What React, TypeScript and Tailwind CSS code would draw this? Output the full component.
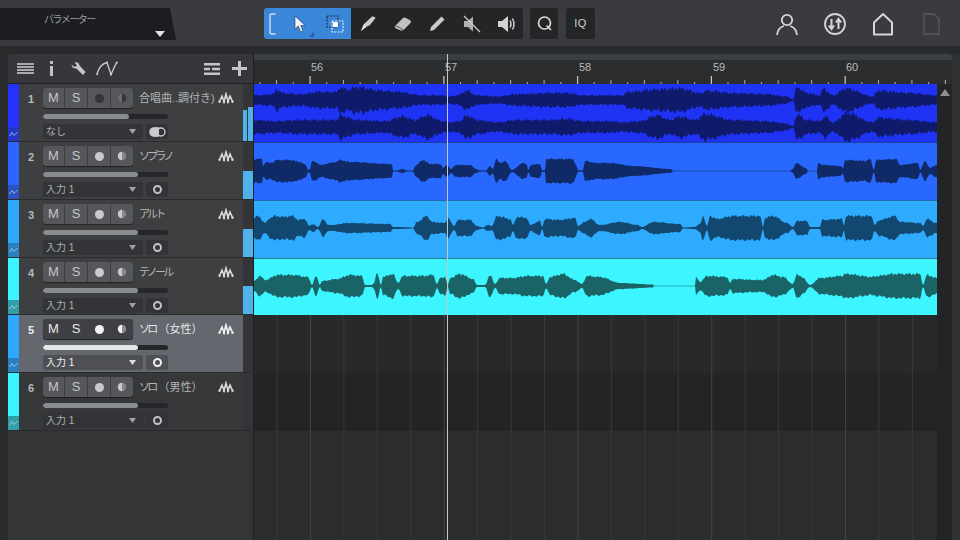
import React from "react";

type P = [number, number];
const T1A: P[] = [[254,4],[273,5],[277,9],[283,6],[300,5],[320,7],[337,7],[340,11],[347,9],[357,11],[383,8],[397,7],[423,4],[443,4],[448,3],[457,4],[467,8],[477,4],[497,3],[517,5],[550,6],[567,6],[583,4],[610,4],[623,4],[627,7],[657,9],[680,10],[700,6],[707,8],[733,6],[767,5],[787,3],[793,0.5],[797,11],[807,6],[820,4],[823,10],[833,4],[846,10],[873,3],[878,8],[910,6],[936,4]];
const T1B: P[] = [[254,6],[277,5],[300,6],[320,6],[337,6],[340,10],[357,6],[385,5],[403,9],[415,6],[427,10],[443,5],[450,4],[460,5],[467,10],[477,6],[497,4],[517,6],[550,6],[567,7],[583,5],[610,5],[623,4],[640,5],[657,10],[670,6],[680,9],[695,6],[705,11],[733,6],[767,5],[787,3],[793,0.5],[797,11],[807,6],[820,5],[825,9],[833,4],[847,12],[873,4],[878,8],[910,6],[936,4]];
const T2: P[] = [[254,12],[262,12],[263,5],[266,9],[270,8],[278,11],[290,11],[300,9],[306,6],[308,1],[310,2],[312,10],[316,9],[320,6],[336,9],[340,11],[350,9],[390,7],[392.5,6],[393,0.4],[397,0.6],[402,2],[407,0.5],[413,0.4],[415,5],[423,11],[430,7],[441,7],[443,3],[447,6],[451,2],[456,6],[470,6],[476,2],[480,0.6],[486,0.6],[490,5],[493,2],[496,12],[500,8],[505,10],[512,1],[523,8],[527,6],[528,1],[531,6],[540,7],[542,0.8],[545,0.8],[546,12],[573,12],[576,6],[578,0.8],[583,0.8],[585,10],[596,8],[610,8],[633,5],[671,2],[673,0.3],[790,0.3],[793,2],[796,8],[806,3],[808,0.3],[817,0.3],[818,8],[823,6],[841,5],[843,2],[845,11],[866,10],[870,12],[874,1],[876,11],[896,12],[900,6],[918,8],[920,1],[925,10],[930,3],[936,6]];
const T3: P[] = [[254,10],[258,12],[265,5],[270,10],[275,12],[283,11],[293,12],[298,8],[305,9],[309,2],[313,4],[318,1],[323,9],[328,3],[333,3],[347,5],[390,4],[393,1],[397,1],[408,0.7],[413,0.3],[417,6],[427,12],[432,6],[445,5],[448,10],[454,2],[458,8],[470,8],[477,2],[483,0.5],[488,3],[492,2],[497,12],[510,9],[513,3],[517,11],[527,10],[530,3],[540,7],[542,1],[545,9],[560,8],[575,10],[578,2],[585,6],[590,9],[600,3],[620,6],[638,3],[642,1],[653,6],[680,4],[683,0.5],[695,1],[700,4],[703,12],[707,2],[710,12],[717,9],[733,12],[760,12],[763,1],[765,10],[773,12],[787,5],[793,1],[797,7],[807,7],[810,1],[820,1],[822,8],[842,9],[844,2],[846,12],[872,12],[874,3],[880,8],[895,12],[900,6],[920,5],[923,2],[927,9],[936,5]];
const T4: P[] = [[254,5],[260,10],[265,6],[278,11],[293,11],[308,9],[312,1],[316,10],[320,1],[322,5],[337,7],[350,11],[362,10],[365,1],[372,1],[374,3],[377,13],[381,1],[383,9],[393,12],[398,3],[403,10],[423,10],[433,11],[437,2],[440,8],[445,9],[448,1],[450,8],[460,12],[473,7],[477,1],[485,1],[490,11],[495,2],[500,8],[513,8],[527,10],[543,10],[546,2],[550,9],[563,12],[575,6],[582,2],[587,10],[600,9],[620,3],[653,1.5],[654,0.3],[695,0.3],[696,9],[700,4],[707,10],[727,9],[730,3],[733,7],[757,6],[763,6],[773,11],[783,9],[793,2],[797,12],[803,8],[810,1],[820,8],[842,10],[845,12],[873,9],[877,10],[893,12],[920,12],[923,1],[927,11],[936,8]];

function envPath(pts: P[], c: number, seed: number, jag: number, scale = 1) {
  const top: string[] = [];
  const bot: string[] = [];
  let i = 0;
  for (let x = 254; x <= 937; x += 1) {
    while (i < pts.length - 2 && pts[i + 1][0] < x) i++;
    const [x0, h0] = pts[i];
    const [x1, h1] = pts[i + 1];
    const t = Math.min(1, Math.max(0, (x - x0) / (x1 - x0)));
    const s = t * t * (3 - 2 * t);
    const h = (h0 + (h1 - h0) * s) * scale;
    const n1 = 1 + jag * (Math.sin(x * 1.73 + seed) + 0.6 * Math.sin(x * 0.71 + seed * 2));
    const n2 = 1 + jag * (Math.sin(x * 1.31 + seed * 3) + 0.6 * Math.sin(x * 0.57 + seed));
    top.push(`${x - 254},${(c - Math.max(0.3, h * n1)).toFixed(1)}`);
    bot.unshift(`${x - 254},${(c + Math.max(0.3, h * n2)).toFixed(1)}`);
  }
  return "M" + top.concat(bot).join("L") + "Z";
}

const Wave = ({ color, paths, h }: { color: string; paths: string[]; h: number }) => (
  <svg width="683" height={h} className="block">
    {paths.map((d, i) => (
      <path key={i} d={d} fill={color} />
    ))}
  </svg>
);

const WaveIcon = ({ on }: { on: boolean }) => {
  const c = on ? "#f0f0f0" : "#d6d8da";
  return (
    <svg width="16" height="12" viewBox="0 0 16 12" fill="none" stroke={c} strokeWidth="1.6" className="-ml-px">
      <path d="M1.5 9.5 4 4 6 9.5 8 2 10 9.5 12 4 14.5 9.5" />
      <circle cx="1.5" cy="9.8" r="1.2" fill={c} stroke="none" />
      <circle cx="6" cy="10" r="1.2" fill={c} stroke="none" />
      <circle cx="10" cy="10" r="1.2" fill={c} stroke="none" />
      <circle cx="14.5" cy="9.8" r="1.2" fill={c} stroke="none" />
    </svg>
  );
};

type Track = {
  n: number; kana: string; rest: string; color: string; auto: string; input: string; fill: number;
  height: string; meter: "double" | "single" | "none"; state: "dim" | "normal" | "selected" | "quiet";
};

const tracks: Track[] = [
  { n: 1, kana: "", rest: "合唱曲..調付き)", color: "bg-[#2233ff]", auto: "bg-[#2336c8]", input: "なし", fill: 68.5, height: "h-[58px]", meter: "double", state: "dim" },
  { n: 2, kana: "ソプラノ", rest: "", color: "bg-[#2a66ff]", auto: "bg-[#2a52c0]", input: "入力 1", fill: 76, height: "h-[58px]", meter: "single", state: "normal" },
  { n: 3, kana: "アルト", rest: "", color: "bg-[#2ea8ff]", auto: "bg-[#2a80c0]", input: "入力 1", fill: 76, height: "h-[58px]", meter: "single", state: "normal" },
  { n: 4, kana: "テノール", rest: "", color: "bg-[#3cf4ff]", auto: "bg-[#2fa0a8]", input: "入力 1", fill: 76, height: "h-[57px]", meter: "single", state: "normal" },
  { n: 5, kana: "ソロ", rest: "（女性）", color: "bg-[#2ea8ff]", auto: "bg-[#2a80c0]", input: "入力 1", fill: 76, height: "h-[58px]", meter: "none", state: "selected" },
  { n: 6, kana: "ソロ", rest: "（男性）", color: "bg-[#3cf4ff]", auto: "bg-[#2fa0a8]", input: "入力 1", fill: 76, height: "h-[58px]", meter: "none", state: "quiet" },
];

function TrackRow({ t }: { t: Track }) {
  const sel = t.state === "selected";
  const rowBg = sel ? "bg-[#64676e]" : t.state === "quiet" ? "bg-[#36383a]" : "bg-[#3d3f41]";
  const dotColor = t.state === "dim" ? "bg-[#34363a]" : sel ? "bg-[#f2f2f2]" : "bg-[#c8cacc]";
  const letter = sel ? "text-[#e8e8e8]" : "text-[#c4c6c8]";
  const name = sel ? "text-[#e4e5e6]" : "text-[#b4b6b8]";
  const group = sel ? "bg-[#3e4044]" : "bg-[#55575a]";
  const divide = sel ? "border-[#3e4044]" : "border-[#3c3e40]";
  const barFill = sel ? "bg-[#e4e5e6]" : "bg-[#8a8d90]";
  const selectBg = sel ? "bg-[#4e5056]" : "bg-[#323437]";
  return (
    <div className={`flex ${t.height} ${rowBg} border-b border-[#2a2b2d]`}>
      <div className={`flex w-[11px] flex-col ${t.color}`}>
        <div className="flex-1" />
        <div className={`flex h-[14px] items-center justify-center ${t.auto}`}>
          <svg width="9" height="6" viewBox="0 0 9 6" fill="none" stroke="#b9d4f0" strokeWidth="0.8"><path d="M0.5 5 3 1.5 5 4.5 8.5 1" /></svg>
        </div>
      </div>
      <div className={`w-[24px] pt-[7px] pl-[9px] font-['Liberation_Sans'] text-[11px] leading-[16px] font-bold ${sel ? "text-[#eeeeee]" : "text-[#b8babc]"}`}>{t.n}</div>
      <div className="w-[200px] pt-[4px]">
        <div className="flex h-[20px] items-center">
          <div className={`flex h-[20px] w-[90px] overflow-hidden rounded-[3px] ${group} shadow-[0_1px_1px_#222]`}>
            <div className={`flex w-[22px] items-center justify-center border-r ${divide} font-['Liberation_Sans'] text-[13px] ${letter}`}>M</div>
            <div className={`flex w-[23px] items-center justify-center border-r ${divide} font-['Liberation_Sans'] text-[13px] ${letter}`}>S</div>
            <div className={`flex w-[23px] items-center justify-center border-r ${divide}`}>
              <div className={`h-[9px] w-[9px] rounded-full ${dotColor}`} />
            </div>
            <div className="flex w-[22px] items-center justify-center">
              <svg width="10" height="10" viewBox="0 0 10 10">
                <circle cx="5" cy="5" r="4.2" fill={t.state === "dim" ? "#34363a" : sel ? "#8a8c90" : "#85878a"} />
                <path d="M5 0.8A4.2 4.2 0 0 0 5 9.2Z" fill={t.state === "dim" ? "#6a6c70" : sel ? "#f2f2f2" : "#c8cacc"} />
              </svg>
            </div>
          </div>
          <div className={`ml-[6px] w-[80px] font-['Liberation_Sans','Noto_Sans_CJK_JP',sans-serif] text-[11px] whitespace-nowrap ${name}`}>
            {t.kana && <span className="tracking-[-2.8px]">{t.kana}</span>}
            {t.kana && t.rest && <span className="inline-block w-[3px]" />}
            {t.rest}
          </div>
          <WaveIcon on={sel} />
        </div>
        <div className="mt-[6px] h-[5px] w-[125px] overflow-hidden rounded-full bg-[#26272a]">
          <div className={`h-full rounded-full ${barFill}`} style={{ width: `${t.fill}%` }} />
        </div>
        <div className="mt-[5px] flex h-[15px] gap-[3px]">
          <div className={`flex w-[100px] items-center justify-between rounded-[2px] ${selectBg} pr-[7px] pl-[3px]`}>
            <span className={`font-['Liberation_Sans','Noto_Sans_CJK_JP',sans-serif] text-[10px] ${sel ? "text-[#eeeeee]" : "text-[#aeb0b2]"}`}>{t.input}</span>
            <svg width="7" height="5" viewBox="0 0 7 5"><path d="M0 0H7L3.5 5Z" fill={sel ? "#e0e0e0" : "#a0a2a4"} /></svg>
          </div>
          <div className={`flex w-[22px] items-center justify-center rounded-[2px] ${selectBg}`}>
            {t.n === 1 ? (
              <svg width="17" height="10" viewBox="0 0 17 10">
                <circle cx="5" cy="5" r="4.8" fill="#c8cacc" />
                <circle cx="12" cy="5" r="4" fill="none" stroke="#c8cacc" strokeWidth="1.4" />
                <rect x="5" y="0.2" width="5" height="9.6" fill="#c8cacc" />
              </svg>
            ) : (
              <div className={`h-[9px] w-[9px] rounded-full border-2 ${sel ? "border-[#f2f2f2]" : "border-[#c0c2c4]"}`} />
            )}
          </div>
        </div>
      </div>
      <div className="flex w-[10px] items-end gap-px bg-[#333538]">
        {t.meter === "double" && (
          <>
            <div className="h-[31px] w-[4px] bg-[#4fb2ea]" />
            <div className="h-[34px] w-[5px] bg-[#4fb2ea]" />
          </>
        )}
        {t.meter === "single" && <div className="h-[28px] w-full bg-[#4fb2ea]" />}
      </div>
    </div>
  );
}

const ticks = Array.from({ length: 44 }, (_, i) => i);
const Ruler = () => (
  <div className="relative h-[30px] bg-[#2c2d2f]">
    <div className="h-[6px] bg-[#3a3f43]" />
    <svg width="698" height="30" className="absolute top-0 left-0">
      {ticks.map((i) => {
        const x = 56 - 16.72 * 3 + 16.72 * i - 0.5;
        const k = i - 3;
        const major = ((k % 8) + 8) % 8 === 0;
        const odd = ((k % 2) + 2) % 2 === 1;
        const h = major ? 8 : odd ? 2 : 4;
        if (x > 695) return null;
        return <rect key={i} x={x} y={30 - h} width={major ? 1.2 : 1} height={h} fill={major ? "#c8cacc" : "#b0b2b4"} />;
      })}
    </svg>
    {[
      ["56", "left-[57px]"],
      ["57", "left-[191px]"],
      ["58", "left-[325px]"],
      ["59", "left-[459px]"],
      ["60", "left-[592px]"],
    ].map(([l, c]) => (
      <span key={l} className={`absolute top-[6px] ${c} font-['Liberation_Sans'] text-[11px] leading-[14px] text-[#b8babc]`}>{l}</span>
    ))}
  </div>
);

const Grid = () => (
  <svg width="683" height="225" className="absolute bottom-0 left-0">
    {Array.from({ length: 21 }, (_, i) => {
      const x = 23 + 33.44 * i;
      const bar = (i - 1) % 4 === 0;
      return <rect key={i} x={x - 0.5} y="0" width="1" height="225" fill={bar ? "#434446" : "#38393b"} />;
    })}
  </svg>
);

const Tool = ({ w, children }: { w: string; children: React.ReactNode }) => (
  <div className={`flex h-full ${w} items-center justify-center`}>{children}</div>
);

export default function App() {
  return (
    <div className="relative h-[540px] w-[960px] overflow-hidden bg-[#292a2c] font-['Liberation_Sans',sans-serif]">
      {/* top bar */}
      <div className="flex h-[46px] items-start bg-[#3a3b3e]">
        <div className="mt-[8px] h-[32px] w-[176px] bg-[#1c1d20] [clip-path:polygon(0_0,170px_0,176px_32px,0_32px)]">
          <div className="flex h-full flex-col">
            <div className="pt-[3px] pl-[44px] font-['Noto_Sans_CJK_JP',sans-serif] text-[10px] leading-[16px] tracking-[-1.5px] text-[#9a9c9e]">パラメーター</div>
            <div className="mt-[4px] ml-[155px] h-0 w-0 border-x-[5px] border-t-[6px] border-x-transparent border-t-[#e4e4e4]" />
          </div>
        </div>
        <div className="mt-[8px] ml-[88px] flex h-[31px]">
          <div className="flex rounded-l-[3px] bg-[#3a86d8]">
            <Tool w="w-[18px]">
              <svg width="8" height="22" viewBox="0 0 8 22" fill="none" stroke="#cfe0f2" strokeWidth="1.4"><path d="M6.5 1H2.5Q1 1 1 3V19Q1 21 2.5 21H6.5" /></svg>
            </Tool>
            <Tool w="w-[36px]">
              <div className="relative flex">
                <svg width="12" height="18" viewBox="0 0 12 18"><path d="M1 1V14L4.3 11 6.7 17 9 16 6.7 10.5H11Z" fill="#f2f4f8" stroke="#2c3a50" strokeWidth="0.6" /></svg>
                <div className="absolute top-[17px] left-[15px] h-0 w-0 border-b-[5px] border-l-[5px] border-b-[#2a5d9e] border-l-transparent" />
              </div>
            </Tool>
            <Tool w="w-[33px]">
              <svg width="18" height="18" viewBox="0 0 18 18" fill="none">
                <rect x="1" y="1" width="11" height="11" stroke="#20324a" strokeDasharray="2 1.2" strokeWidth="1.2" />
                <rect x="6" y="6" width="11" height="11" stroke="#e8eef6" strokeDasharray="2 1.2" strokeWidth="1.2" />
                <rect x="7" y="7" width="5" height="5" fill="#ffffff" />
              </svg>
            </Tool>
          </div>
          <div className="flex rounded-r-[3px] bg-[#242527]">
            <Tool w="w-[34px]">
              <svg width="17" height="17" viewBox="0 0 17 17"><path d="M1 16 4 9 12 1.5Q15 1 15.5 3L10 10 6 12Z" fill="#c8cacc" /><path d="M4 9 6 12 1 16Z" fill="#e8e8e8" /></svg>
            </Tool>
            <Tool w="w-[35px]">
              <svg width="18" height="16" viewBox="0 0 18 16"><path d="M1 10 9 2Q10.5 1 12 2L16.5 4.5Q17.5 5.5 16.5 7L10 13.5Q8.5 15 7 14.5L2 12.5Q0.5 11.5 1 10Z" fill="#bfc1c3" /><path d="M1.5 9.5 8 13 9 15" fill="none" stroke="#333" strokeWidth="0.8" /></svg>
            </Tool>
            <Tool w="w-[35px]">
              <svg width="17" height="17" viewBox="0 0 17 17"><path d="M1 16 2 12 12.5 1.5 15.5 4.5 5 15Z" fill="#c8cacc" /></svg>
            </Tool>
            <Tool w="w-[34px]">
              <svg width="18" height="18" viewBox="0 0 18 18"><path d="M1 6H5L10 1.5V16.5L5 12H1Z" fill="#aeb0b2" /><path d="M1 1 17 17" stroke="#c8cacc" strokeWidth="1.3" /></svg>
            </Tool>
            <Tool w="w-[34px]">
              <svg width="19" height="18" viewBox="0 0 19 18" fill="none"><path d="M1 6H5L11 1V17L5 12H1Z" fill="#d0d2d4" /><path d="M13 5.5Q15 9 13 12.5M15.5 3.5Q18.5 9 15.5 14.5" stroke="#d0d2d4" strokeWidth="1.5" /></svg>
            </Tool>
          </div>
          <div className="ml-[7px] flex w-[28px] items-center justify-center rounded-[3px] bg-[#242527]">
            <svg width="15" height="15" viewBox="0 0 15 15" fill="none" stroke="#d8dadc" strokeWidth="1.7"><circle cx="7.5" cy="7" r="6" /><path d="M9.5 9.5 14 14" /></svg>
          </div>
          <div className="ml-[8px] flex w-[29px] items-center justify-center rounded-[3px] bg-[#242527] text-[11px] font-medium tracking-[0.5px] text-[#d0d2d4]">IQ</div>
        </div>
        <div className="mt-[12px] ml-auto flex gap-[24px] pr-[17px]">
          <svg width="24" height="24" viewBox="0 0 24 24" fill="none" stroke="#d4d6d8" strokeWidth="1.8"><circle cx="12" cy="8" r="5.2" /><path d="M2 23Q3 15.5 9 14M22 23Q21 15.5 15 14" /></svg>
          <svg width="24" height="24" viewBox="0 0 24 24" fill="none" stroke="#d4d6d8" strokeWidth="1.8"><circle cx="12" cy="12" r="10" /><path d="M8.5 7V17M5.8 13.5 8.5 17 11 13.5M15.5 17V7M13 10.5 15.5 7 18.2 10.5" strokeWidth="2" /></svg>
          <svg width="24" height="24" viewBox="0 0 24 24" fill="none" stroke="#d4d6d8" strokeWidth="2"><path d="M3 22.5V10.5L12 2 21 10.5V22.5Z" strokeLinejoin="round" /></svg>
          <svg width="24" height="24" viewBox="0 0 24 24" fill="none" stroke="#505254" strokeWidth="1.8"><path d="M5 2H15L20 7V22H5Z" /></svg>
        </div>
      </div>
      <div className="h-[8px]" />
      {/* main */}
      <div className="flex h-[486px]">
        <div className="w-[8px]" />
        <div className="flex w-[245px] flex-col overflow-hidden rounded-tl-[3px] bg-[#333537]">
          <div className="flex h-[30px] items-center border-b border-[#1f2022] bg-[#35373a] pr-[6px] pl-[9px]">
            <svg width="17" height="11" viewBox="0 0 17 11"><path d="M0 0H17V2H0ZM0 3H17V5H0ZM0 6H17V8H0ZM0 9H17V11H0Z" fill="#a8aaac" /></svg>
            <div className="ml-[16px] flex h-[15px] w-[3px] flex-col gap-[2px]">
              <div className="h-[3px] bg-[#c0c2c4]" />
              <div className="flex-1 bg-[#c0c2c4]" />
            </div>
            <svg className="ml-[18px]" width="15" height="14" viewBox="0 0 15 14"><path d="M0.5 2.5 3.5 5 6 3.5 3.5 0.5Q7.5 -0.5 8.5 3.5L14.5 10 12 13 5.5 6.5Q1 7 0.5 2.5Z" fill="#c4c6c8" /></svg>
            <svg className="ml-[10px]" width="23" height="15" viewBox="0 0 23 15" fill="none" stroke="#c4c6c8" strokeWidth="1.4">
              <path d="M1 13Q4 3 11 1.5L15 13.5 20.5 1.5" />
              <circle cx="1.2" cy="13.3" r="1" fill="#c4c6c8" stroke="none" />
              <circle cx="15" cy="13.5" r="1" fill="#c4c6c8" stroke="none" />
              <circle cx="11" cy="1.5" r="1" fill="#c4c6c8" stroke="none" />
              <circle cx="21" cy="1.6" r="1" fill="#c4c6c8" stroke="none" />
            </svg>
            <svg className="ml-auto" width="16" height="12" viewBox="0 0 16 12"><path d="M0 0H16V2.5H0ZM0 4.8H6V7.2H0ZM8 4.8H16V7.2H8ZM0 9.5H16V12H0Z" fill="#c4c6c8" /></svg>
            <svg className="ml-[12px]" width="15" height="15" viewBox="0 0 15 15"><path d="M6 0H9V6H15V9H9V15H6V9H0V6H6Z" fill="#c4c6c8" /></svg>
          </div>
          {tracks.map((t) => (
            <TrackRow key={t.n} t={t} />
          ))}
        </div>
        <div className="w-px bg-[#1f2022]" />
        <div className="flex w-[698px] flex-col">
          <div className="overflow-hidden rounded-tr-[3px]">
            <Ruler />
          </div>
          <div className="flex flex-1">
            <div className="relative w-[683px] bg-[#2b2c2e]">
              <div className="h-[58px] bg-[#1f33f5]"><Wave h={58} color="#101a6b" paths={[envPath(T1A, 16, 1, 0.14, 1.15), envPath(T1B, 43, 2.4, 0.14, 1.15)]} /></div>
              <div className="h-[58px] border-t border-[#1d3f9a] bg-[#2868ff]"><Wave h={57} color="#0f2a66" paths={[envPath(T2, 28, 3, 0.05)]} /></div>
              <div className="h-[58px] border-t border-[#1f6ea8] bg-[#2eaaff]"><Wave h={57} color="#124870" paths={[envPath(T3, 27, 4, 0.07)]} /></div>
              <div className="h-[57px] border-t border-[#2a7f8e] bg-[#3df5ff]"><Wave h={56} color="#1a6468" paths={[envPath(T4, 27, 5, 0.07)]} /></div>
              <div className="h-[58px] bg-[#28292b]" />
              <div className="h-[58px] bg-[#232426]" />
              <Grid />
            </div>
            <div className="w-[15px] bg-[#232426] pt-[5px] pl-[3px]">
              <div className="h-0 w-0 border-x-[5px] border-b-[7px] border-x-transparent border-b-[#8c8e90]" />
            </div>
          </div>
        </div>
        <div className="flex-1 bg-[#303133]" />
      </div>
      {/* playhead */}
      <div className="absolute top-[54px] bottom-0 left-[447px] w-px bg-[#c4c6c8]" />
    </div>
  );
}
